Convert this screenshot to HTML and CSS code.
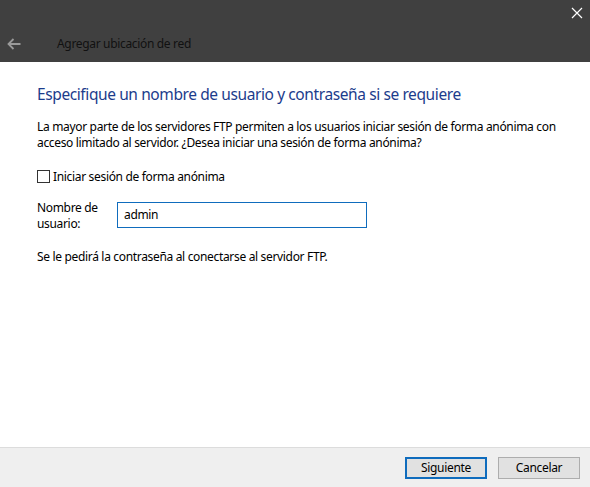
FILE: index.html
```html
<!DOCTYPE html>
<html>
<head>
	<meta charset="utf-8">
	<title>Agregar ubicación de red</title>
	<link rel="stylesheet" href="styles.css">
</head>
<body>
	<div class="window">
		<header class="titlebar">
			<div class="caption">
				<button class="close" title="Cerrar">
					<svg width="12" height="12" viewBox="0 0 12 12"><path d="M1 1L11 11M11 1L1 11" stroke="#fff" stroke-width="1.2"/></svg>
				</button>
			</div>
			<div class="nav">
				<button class="back" title="Atrás">
					<svg width="14" height="12" viewBox="0 0 14 12"><path d="M13.5 6H1.5M6.5 1L1.5 6l5 5" fill="none" stroke="#9a9a9a" stroke-width="1.8"/></svg>
				</button>
				<span class="title">Agregar ubicación de red</span>
			</div>
		</header>

		<main class="content">
			<h1>Especifique un nombre de usuario y contraseña si se requiere</h1>
			<p class="intro">La mayor parte de los servidores FTP permiten a los usuarios iniciar sesión de forma anónima con acceso limitado al servidor. ¿Desea iniciar una sesión de forma anónima?</p>

			<label class="check">
				<span class="box"></span>
				Iniciar sesión de forma anónima
			</label>

			<div class="field">
				<label for="user">Nombre de usuario:</label>
				<input type="text" id="user" value="admin">
			</div>

			<p class="note">Se le pedirá la contraseña al conectarse al servidor FTP.</p>
		</main>

		<footer class="actions">
			<button class="btn primary">Siguiente</button>
			<button class="btn">Cancelar</button>
		</footer>
	</div>
</body>
</html>
```

FILE: styles.css
```css
* {
	padding: 0;
	margin: 0;
	box-sizing: border-box;
}
html, body {
	width: 100%;
	height: 100%;
	background: white;
	font-family: "Noto Sans", "Open Sans", sans-serif;
	font-size: 12px;
	letter-spacing: -0.33px;
	color: #000;
}
.window {
	height: 487px;
	display: flex;
	flex-direction: column;
}
.titlebar {
	height: 62px;
	background: #404040;
	display: flex;
	flex-direction: column;
}
.caption {
	height: 30px;
	display: flex;
	justify-content: flex-end;
}
.close {
	width: 24px;
	height: 26px;
	margin-right: 1px;
	border: none;
	background: transparent;
	display: flex;
	align-items: center;
	justify-content: center;
}
.nav {
	flex: 1;
	display: flex;
	align-items: center;
	padding-bottom: 5px;
}
.back {
	width: 28px;
	height: 24px;
	border: none;
	background: transparent;
	display: flex;
	align-items: center;
	justify-content: center;
}
.title {
	margin-left: 29px;
	color: #111;
	font-size: 12px;
}
.content {
	flex: 1;
	padding: 21px 37px 0 37px;
}
h1 {
	font-weight: normal;
	font-size: 15.5px;
	letter-spacing: -0.4px;
	color: #1c3c8c;
	line-height: 22px;
	margin-bottom: 14px;
}
.intro {
	line-height: 16px;
	width: 530px;
}
.check {
	display: flex;
	align-items: center;
	margin-top: 17px;
	height: 16px;
}
.box {
	width: 13px;
	height: 13px;
	border: 1px solid #333;
	background: white;
	margin-right: 3px;
}
.field {
	display: flex;
	align-items: center;
	margin-top: 13px;
}
.field label {
	width: 80px;
	line-height: 16px;
	padding-top: 3px;
}
.field input {
	width: 250px;
	height: 26px;
	border: 1px solid #0f6cbd;
	padding: 0 6px;
	font-family: inherit;
	font-size: 12px;
	letter-spacing: inherit;
	outline: none;
}
.note {
	margin-top: 16px;
}
.actions {
	height: 40px;
	background: #efefef;
	border-top: 1px solid #dcdcdc;
	display: flex;
	justify-content: flex-end;
	align-items: center;
	gap: 11px;
	padding: 0 10px 0 0;
}
.btn {
	width: 82px;
	height: 22px;
	background: #e1e1e1;
	border: 1px solid #adadad;
	font-family: inherit;
	font-size: 12px;
	letter-spacing: inherit;
	color: #000;
}
.btn.primary {
	border: 2px solid #0f6cbd;
}
```
